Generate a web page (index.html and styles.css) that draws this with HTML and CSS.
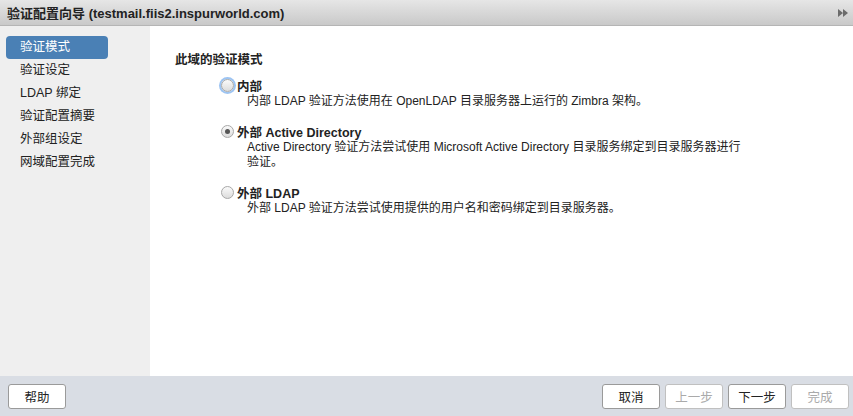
FILE: index.html
```html
<!DOCTYPE html>
<html lang="zh">
<head>
    <meta charset="UTF-8">
    <title>验证配置向导</title>
    <link rel="stylesheet" href="styles.css">
</head>
<body>
    <div class="dialog">
        <div class="titlebar">
            <span class="title">验证配置向导 <span class="host">(testmail.fiis2.inspurworld.com)</span></span>
            <svg class="arrows" width="10" height="8" viewBox="0 0 10 8">
                <path d="M0 0 L5 4 L0 8 Z M5 0 L10 4 L5 8 Z" fill="#6b6b6b"/>
            </svg>
        </div>
        <div class="main">
            <ul class="steps">
                <li class="active">验证模式</li>
                <li>验证设定</li>
                <li>LDAP 绑定</li>
                <li>验证配置摘要</li>
                <li>外部组设定</li>
                <li>网域配置完成</li>
            </ul>
            <div class="content">
                <h2>此域的验证模式</h2>
                <div class="options">
                    <div class="option">
                        <label><span class="radio focus"></span>内部</label>
                        <p>内部 LDAP 验证方法使用在 OpenLDAP 目录服务器上运行的 Zimbra 架构。</p>
                    </div>
                    <div class="option">
                        <label><span class="radio checked"></span>外部 Active Directory</label>
                        <p>Active Directory 验证方法尝试使用 Microsoft Active Directory 目录服务绑定到目录服务器进行验证。</p>
                    </div>
                    <div class="option">
                        <label><span class="radio"></span>外部 LDAP</label>
                        <p>外部 LDAP 验证方法尝试使用提供的用户名和密码绑定到目录服务器。</p>
                    </div>
                </div>
            </div>
        </div>
        <div class="footer">
            <button>帮助</button>
            <div class="nav">
                <button>取消</button>
                <button disabled>上一步</button>
                <button>下一步</button>
                <button disabled>完成</button>
            </div>
        </div>
    </div>
</body>
</html>
```

FILE: styles.css
```css
* {
    margin: 0;
    padding: 0;
    box-sizing: border-box;
}

body {
    width: 853px;
    height: 416px;
    overflow: hidden;
    font-family: "Liberation Sans", "Noto Sans CJK SC", sans-serif;
    font-size: 12px;
    color: #222;
}

.dialog {
    display: flex;
    flex-direction: column;
    height: 416px;
}

.titlebar {
    height: 26px;
    display: flex;
    align-items: center;
    justify-content: space-between;
    padding: 0 5px 0 7px;
    background: linear-gradient(#e6e6e6, #c9c9c9);
    border-bottom: 1px solid #b5b5b5;
}

.title {
    font-size: 13px;
    font-weight: bold;
    color: #222;
}

.main {
    flex: 1;
    display: flex;
}

.steps {
    width: 150px;
    list-style: none;
    background: #efefef;
    padding: 10px 0 0 6px;
}

.steps li {
    width: 102px;
    height: 23px;
    line-height: 22px;
    padding-left: 14px;
    font-size: 12.5px;
    color: #222;
}

.steps li.active {
    background: #4a80b5;
    color: #fff;
    border-radius: 4px;
}

.content {
    flex: 1;
    background: #fff;
    padding: 23px 0 0 25px;
}

.content h2 {
    font-size: 12.5px;
    font-weight: bold;
    margin-bottom: 9px;
}

.options {
    padding-left: 45px;
    display: flex;
    flex-direction: column;
    gap: 14px;
}

.option label {
    display: flex;
    align-items: center;
    font-weight: bold;
    font-size: 12.5px;
    height: 16px;
}

.option p {
    padding-left: 27px;
    width: 530px;
    margin-top: 1px;
    line-height: 15px;
    font-size: 12px;
}

.radio {
    width: 13px;
    height: 13px;
    border-radius: 50%;
    border: 1px solid #a8a8a8;
    background: linear-gradient(#fafafa, #dcdcdc);
    margin: 0 3px 0 1px;
    position: relative;
}

.radio.focus {
    box-shadow: 0 0 0 2px #9dc4f2;
}

.radio.checked::after {
    content: "";
    position: absolute;
    left: 3px;
    top: 3px;
    width: 5px;
    height: 5px;
    border-radius: 50%;
    background: #555;
}

.footer {
    height: 40px;
    background: #d9dde4;
    display: flex;
    align-items: center;
    justify-content: space-between;
    padding: 0 4px 0 8px;
}

.nav {
    display: flex;
    gap: 5px;
}

button {
    width: 58px;
    height: 25px;
    background: #fff;
    border: 1px solid #9a9a9a;
    border-radius: 3px;
    font-family: "Liberation Sans", "Noto Sans CJK SC", sans-serif;
    font-size: 12.5px;
    color: #222;
}

button:disabled {
    color: #aaa;
    border-color: #c0c0c0;
}
```
